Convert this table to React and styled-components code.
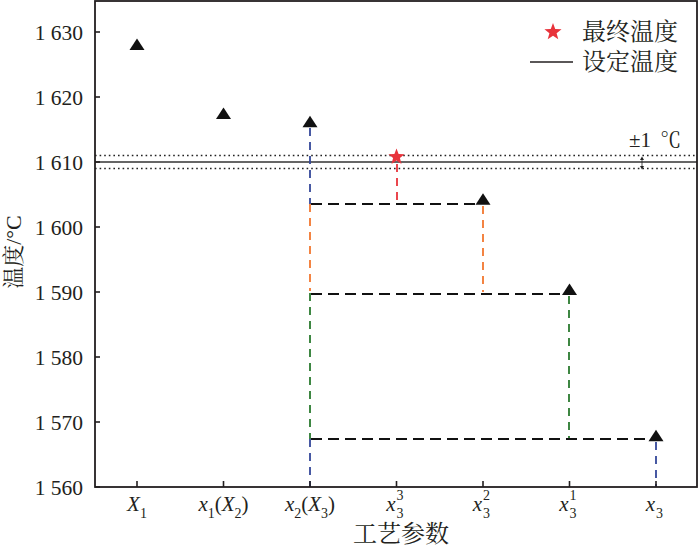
import React from 'react'
import styled, { createGlobalStyle } from 'styled-components'

const GlobalStyle = createGlobalStyle`
  html, body {
    margin: 0;
    padding: 0;
    background: #fff;
  }
`

const SERIF = `"Liberation Serif", "Times New Roman", serif`
const CJK = `"Liberation Serif", "Noto Serif CJK SC", "Noto Sans CJK SC", serif`

const Figure = styled.div`
  width: 700px;
  height: 552px;
  background: #fff;
  overflow: hidden;
`

const Chart = styled.svg`
  display: block;
  width: 700px;
  height: 552px;
`

const TickNum = styled.text`
  font-family: ${SERIF};
  font-size: 21.5px;
  fill: #231f20;
  text-anchor: end;
`

const CatLabel = styled.text`
  font-family: ${SERIF};
  font-size: 21px;
  fill: #231f20;
  text-anchor: ${p => p.$anchor || 'middle'};
`

const Ital = styled.tspan`
  font-style: italic;
`

const Sub = styled.tspan`
  font-size: 14px;
`

const AxisTitle = styled.text`
  font-family: ${CJK};
  font-size: ${p => p.$size || 23}px;
  fill: #231f20;
  text-anchor: middle;
`

const LegendText = styled.text`
  font-family: ${CJK};
  font-size: 24px;
  fill: #231f20;
`

const Note = styled.text`
  font-family: ${CJK};
  font-size: 21px;
  fill: #231f20;
`

const COLORS = {
  blue: '#34479a',
  orange: '#f2772f',
  green: '#2a7a2f',
  red: '#e8333b',
  black: '#111',
}

const L = 95, R = 697, T = 1, B = 487
const xOf = i => 137 + i * 86.5
const yOf = v => B - (v - 1560) * 6.5

const yTicks = [1630, 1620, 1610, 1600, 1590, 1580, 1570, 1560]

const points = [
  { i: 0, v: 1628 },
  { i: 1, v: 1617.4 },
  { i: 2, v: 1616.1 },
  { i: 4, v: 1604.2 },
  { i: 5, v: 1590.3 },
  { i: 6, v: 1567.8 },
]

// dashed guide segments: [x1, y1, x2, y2, colour]
const guides = [
  [310, 128, 310, 204, 'blue'],
  [310, 204, 310, 291, 'orange'],
  [310, 293, 310, 439, 'green'],
  [310, 439, 310, 487, 'blue'],
  [397, 164, 397, 204, 'red'],
  [483, 206, 483, 292, 'orange'],
  [569, 296, 569, 439, 'green'],
  [656, 442, 656, 487, 'blue'],
  [311, 204, 476, 204, 'black'],
  [311, 294, 562, 294, 'black'],
  [311, 439, 649, 439, 'black'],
]

function Triangle({ cx, cy }) {
  return <polygon points={`${cx},${cy - 6.5} ${cx - 7.5},${cy + 5} ${cx + 7.5},${cy + 5}`} fill="#111" />
}

function Star({ cx, cy, r = 8.5, fill = COLORS.red }) {
  const pts = []
  for (let k = 0; k < 10; k++) {
    const ang = -Math.PI / 2 + (k * Math.PI) / 5
    const rad = k % 2 === 0 ? r : r * 0.42
    pts.push(`${(cx + rad * Math.cos(ang)).toFixed(2)},${(cy + rad * Math.sin(ang)).toFixed(2)}`)
  }
  return <polygon points={pts.join(' ')} fill={fill} />
}

function CatTick({ i }) {
  const x = xOf(i)
  const base = 511
  if (i === 0) {
    return (
      <CatLabel x={x} y={base}>
        <Ital>X</Ital><Sub dy="7">1</Sub>
      </CatLabel>
    )
  }
  if (i === 1 || i === 2) {
    return (
      <CatLabel x={x} y={base}>
        <Ital>x</Ital><Sub dy="7">{i}</Sub>
        <tspan dy="-7">(</tspan><Ital>X</Ital><Sub dy="7">{i + 1}</Sub>
        <tspan dy="-7">)</tspan>
      </CatLabel>
    )
  }
  const sup = { 3: '3', 4: '2', 5: '1' }[i]
  return (
    <g>
      <CatLabel x={x - 1} y={base} $anchor="end"><Ital>x</Ital></CatLabel>
      {sup && <CatLabel x={x} y={base - 11} $anchor="start"><Sub>{sup}</Sub></CatLabel>}
      <CatLabel x={x} y={base + 7} $anchor="start"><Sub>3</Sub></CatLabel>
    </g>
  )
}

export default function App() {
  return (
    <Figure>
      <GlobalStyle />
      <Chart viewBox="0 0 700 552">
        {/* reference band */}
        <line x1={L} x2={R} y1={yOf(1611)} y2={yOf(1611)} stroke="#222" strokeWidth="1.4" strokeDasharray="1.6 3" />
        <line x1={L} x2={R} y1={yOf(1609)} y2={yOf(1609)} stroke="#222" strokeWidth="1.4" strokeDasharray="1.6 3" />
        <line x1={L} x2={R} y1={yOf(1610)} y2={yOf(1610)} stroke="#333" strokeWidth="1.4" />

        {/* ±1 marker */}
        <line x1="642" x2="642" y1="158" y2="168" stroke="#222" strokeWidth="0.8" />
        <polygon points="642,156.5 640,160 644,160" fill="#222" />
        <polygon points="642,169.5 640,166 644,166" fill="#222" />
        <Note x="629" y="147">±1 <tspan dx="4">℃</tspan></Note>

        {guides.map(([x1, y1, x2, y2, c], k) => (
          <line key={k} x1={x1} y1={y1} x2={x2} y2={y2} stroke={COLORS[c]} strokeWidth="1.8"
            strokeDasharray={c === 'black' ? '11 6' : '8 6'} />
        ))}

        {points.map(p => <Triangle key={p.i} cx={xOf(p.i)} cy={yOf(p.v)} />)}
        <Star cx={xOf(3)} cy={157} />

        {/* frame and ticks */}
        <rect x={L} y={T} width={R - L} height={B - T} fill="none" stroke="#231f20" strokeWidth="1.8" />
        {yTicks.map(v => (
          <g key={v}>
            <line x1={L} x2={L + 5} y1={yOf(v)} y2={yOf(v)} stroke="#231f20" strokeWidth="1.6" />
            <TickNum x="83" y={yOf(v) + 7.5}>1 {String(v).slice(1)}</TickNum>
          </g>
        ))}
        {[0, 1, 2, 3, 4, 5, 6].map(i => (
          <g key={i}>
            <line x1={xOf(i)} x2={xOf(i)} y1={B} y2={B - 6} stroke="#231f20" strokeWidth="1.6" />
            <CatTick i={i} />
          </g>
        ))}

        <AxisTitle x="401" y="542" $size={24}>工艺参数</AxisTitle>
        <AxisTitle x="0" y="0" $size={22} transform="translate(21 252) rotate(-90)">温度/°C</AxisTitle>

        {/* legend */}
        <Star cx={553} cy={32} r={9} />
        <LegendText x="582" y="40">最终温度</LegendText>
        <line x1="530" x2="573" y1="62" y2="62" stroke="#231f20" strokeWidth="1.4" />
        <LegendText x="582" y="70">设定温度</LegendText>
      </Chart>
    </Figure>
  )
}
